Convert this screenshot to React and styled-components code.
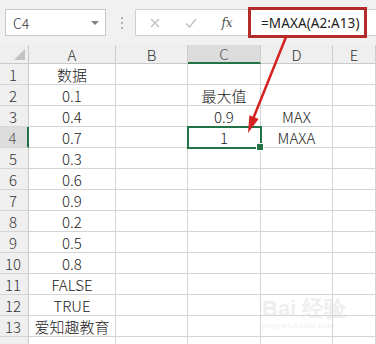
import React from 'react';
import styled, { createGlobalStyle, css } from 'styled-components';

const GlobalStyle = createGlobalStyle`
    html, body {
        margin: 0;
        padding: 0;
        background: #ffffff;
    }
    body {
        font-family: "Noto Sans CJK SC", "Noto Sans", sans-serif;
    }
`;

const Page = styled.div`
    position: relative;
    width: 376px;
    height: 344px;
    overflow: hidden;
    background: #ffffff;
`;

const Toolbar = styled.div`
    display: flex;
    align-items: center;
    height: 45px;
    padding-left: 5px;
    box-sizing: border-box;
    background: #f1f1f1;
`;

const NameBox = styled.div`
    display: flex;
    align-items: center;
    justify-content: space-between;
    width: 101px;
    height: 27px;
    box-sizing: border-box;
    padding: 0 6px 0 7px;
    background: #ffffff;
    border: 1px solid #c8c8c8;
    font-size: 14px;
    font-weight: 300;
    color: #333;
`;

const DropArrow = styled.span`
    width: 0;
    height: 0;
    border-left: 4px solid transparent;
    border-right: 4px solid transparent;
    border-top: 4px solid #808080;
`;

const Grip = styled.div`
    display: flex;
    flex-direction: column;
    gap: 3px;
    margin: 0 12px 0 15px;
    span {
        width: 2px;
        height: 2px;
        background: #b0b0b0;
    }
`;

const FormulaBar = styled.div`
    flex: 1;
    display: flex;
    align-items: center;
    height: 27px;
    background: #ffffff;
    border-top: 1px solid #d0d0d0;
    border-bottom: 1px solid #d0d0d0;
    border-left: 1px solid #d0d0d0;
    box-sizing: border-box;
`;

const BarIcon = styled.span`
    display: flex;
    align-items: center;
    justify-content: center;
    width: ${p => p.w}px;
    color: #555;
`;

const Fx = styled.span`
    font-family: "DejaVu Serif", "Liberation Serif", serif;
    font-style: italic;
    font-size: 12px;
    color: #505050;
`;

const FormulaInput = styled.div`
    display: flex;
    align-items: center;
    width: 119px;
    height: 31px;
    margin-left: 2px;
    box-sizing: border-box;
    border: 3px solid #b32b2b;
    padding-left: 10px;
    font-family: "Noto Sans", sans-serif;
    font-size: 13.5px;
    color: #222;
    letter-spacing: 0.1px;
`;

const Sheet = styled.div`
    display: grid;
    grid-template-columns: 29px 87px 72px 73px 72px 1fr;
    grid-auto-rows: 21px;
    grid-template-rows: 19px;
`;

const Corner = styled.div`
    position: relative;
    background: #efefef;
    border-right: 1px solid #c9c9c9;
    border-bottom: 1px solid #c9c9c9;
    &::after {
        content: '';
        position: absolute;
        right: 3px;
        bottom: 3px;
        width: 0;
        height: 0;
        border-left: 11px solid transparent;
        border-bottom: 11px solid #c2c2c2;
    }
`;

const ColHead = styled.div`
    display: flex;
    align-items: center;
    justify-content: center;
    background: #efefef;
    border-right: 1px solid #cdcdcd;
    border-bottom: 1px solid #c9c9c9;
    box-sizing: border-box;
    font-size: 15px;
    font-weight: 300;
    color: #333;
    ${p => p.active && css`
        background: #dcdcdc;
        border-bottom: 2px solid #217346;
        color: #555;
    `}
`;

const RowHead = styled.div`
    display: flex;
    align-items: center;
    justify-content: center;
    background: #efefef;
    border-right: 1px solid #c9c9c9;
    border-bottom: 1px solid #d6d6d6;
    box-sizing: border-box;
    font-size: 15px;
    font-weight: 300;
    color: #333;
    padding-right: 2px;
    ${p => p.active && css`
        background: #dcdcdc;
        border-right: 2px solid #217346;
        color: #555;
    `}
`;

const Cell = styled.div`
    position: relative;
    display: flex;
    align-items: center;
    justify-content: center;
    border-right: 1px solid #d4d4d4;
    border-bottom: 1px solid #d4d4d4;
    box-sizing: border-box;
    font-size: 15px;
    font-weight: 300;
    color: #222;
    white-space: nowrap;
    ${p => p.selected && css`
        outline: 2px solid #217346;
        outline-offset: -1px;
        z-index: 1;
        &::after {
            content: '';
            position: absolute;
            right: -4px;
            bottom: -4px;
            width: 6px;
            height: 6px;
            background: #217346;
            border: 1px solid #ffffff;
        }
    `}
`;

const Overlay = styled.svg`
    position: absolute;
    left: 0;
    top: 0;
    pointer-events: none;
    z-index: 5;
`;

const Watermark = styled.div`
    position: absolute;
    left: 262px;
    top: 298px;
    font-family: "Liberation Sans", sans-serif;
    font-size: 22px;
    font-weight: bold;
    color: rgba(222, 222, 222, 0.5);
    line-height: 1;
    small {
        display: block;
        font-size: 8px;
        font-weight: normal;
        margin-top: 2px;
        letter-spacing: 0.5px;
    }
`;

const columns = ['A', 'B', 'C', 'D', 'E'];

const rows = [
    ['数据', '', '', '', ''],
    ['0.1', '', '最大值', '', ''],
    ['0.4', '', '0.9', 'MAX', ''],
    ['0.7', '', '1', 'MAXA', ''],
    ['0.3', '', '', '', ''],
    ['0.6', '', '', '', ''],
    ['0.9', '', '', '', ''],
    ['0.2', '', '', '', ''],
    ['0.5', '', '', '', ''],
    ['0.8', '', '', '', ''],
    ['FALSE', '', '', '', ''],
    ['TRUE', '', '', '', ''],
    ['爱知趣教育', '', '', '', ''],
    ['', '', '', '', ''],
];

export default function App() {
    return (
        <Page>
            <GlobalStyle />
            <Toolbar>
                <NameBox>
                    C4
                    <DropArrow />
                </NameBox>
                <Grip><span /><span /><span /></Grip>
                <FormulaBar>
                    <BarIcon w={38}>
                        <svg width="10" height="10" viewBox="0 0 10 10">
                            <path d="M1 1L9 9M9 1L1 9" stroke="#bdbdbd" strokeWidth="1.3" />
                        </svg>
                    </BarIcon>
                    <BarIcon w={34}>
                        <svg width="12" height="10" viewBox="0 0 12 10">
                            <path d="M1 5.5L4.5 9L11 1" stroke="#bdbdbd" strokeWidth="1.3" fill="none" />
                        </svg>
                    </BarIcon>
                    <BarIcon w={38}>
                        <Fx>fx</Fx>
                    </BarIcon>
                    <FormulaInput>=MAXA(A2:A13)</FormulaInput>
                </FormulaBar>
            </Toolbar>
            <Sheet>
                <Corner />
                {columns.map(c => (
                    <ColHead key={c} active={c === 'C'}>{c}</ColHead>
                ))}
                {rows.map((r, i) => (
                    <React.Fragment key={i}>
                        <RowHead active={i === 3}>{i < 13 ? i + 1 : ''}</RowHead>
                        {r.map((v, j) => (
                            <Cell key={j} selected={i === 3 && j === 2}>{v}</Cell>
                        ))}
                    </React.Fragment>
                ))}
            </Sheet>
            <Watermark>
                Bai 经验
                <small>jingyan.baidu.com</small>
            </Watermark>
            <Overlay width="376" height="344">
                <line x1="286" y1="37" x2="253" y2="119" stroke="#d42222" strokeWidth="2.5" />
                <polygon points="248,133 258.6,119 249.4,115.3" fill="#d42222" />
            </Overlay>
        </Page>
    );
}
